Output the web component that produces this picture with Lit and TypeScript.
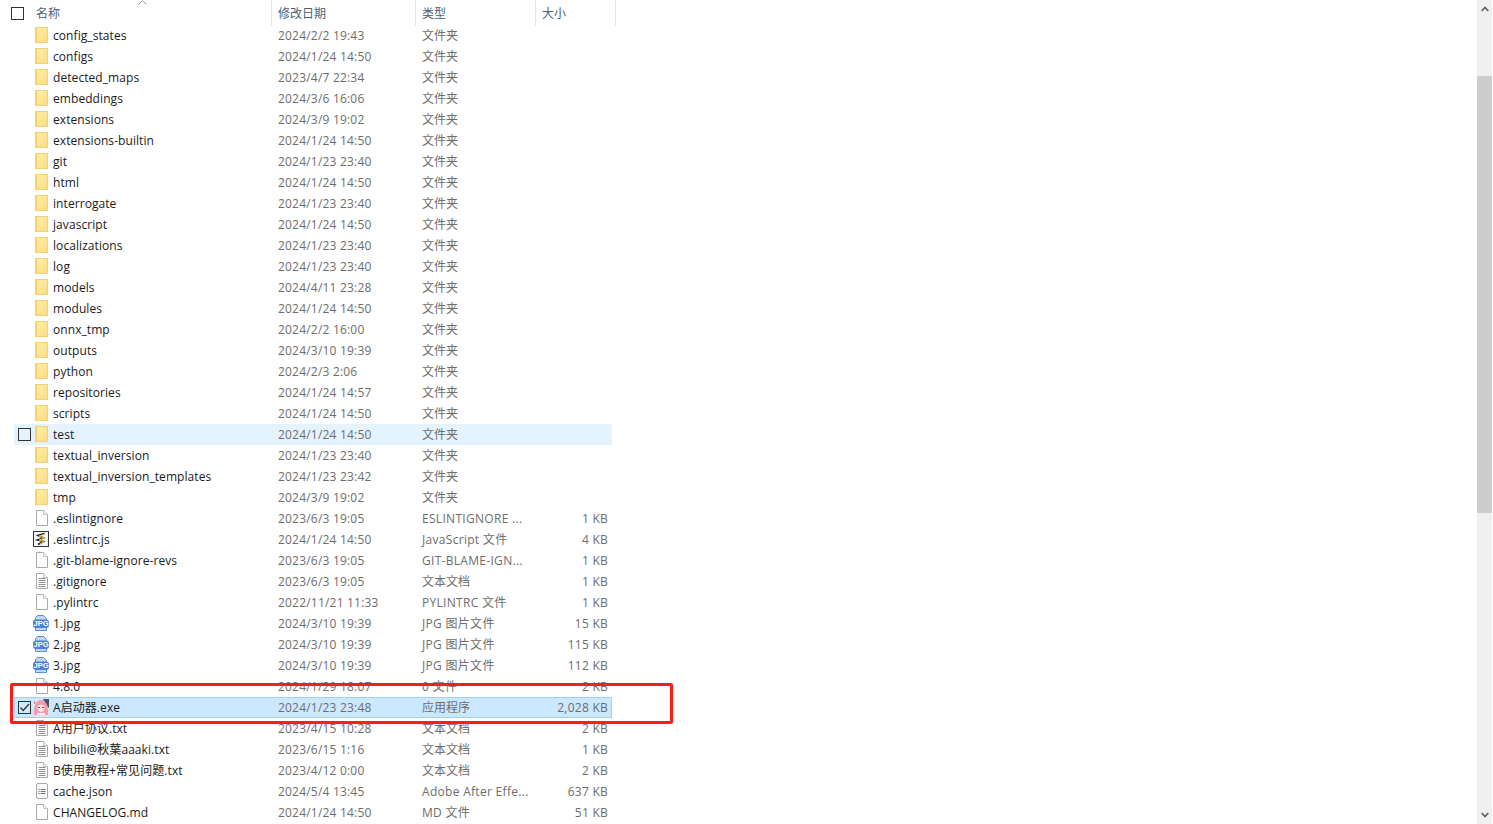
import { LitElement, html, css, svg } from "lit";
import { customElement } from "lit/decorators.js";

type Kind = "folder" | "blank" | "txt" | "json" | "js" | "jpg" | "exe";
interface Row { n: string; d: string; t: string; s?: string; k: Kind; state?: "hot" | "sel"; }

const F = "文件夹";
const folders: [string, string][] = [
  ["config_states", "2024/2/2 19:43"], ["configs", "2024/1/24 14:50"], ["detected_maps", "2023/4/7 22:34"],
  ["embeddings", "2024/3/6 16:06"], ["extensions", "2024/3/9 19:02"], ["extensions-builtin", "2024/1/24 14:50"],
  ["git", "2024/1/23 23:40"], ["html", "2024/1/24 14:50"], ["interrogate", "2024/1/23 23:40"],
  ["javascript", "2024/1/24 14:50"], ["localizations", "2024/1/23 23:40"], ["log", "2024/1/23 23:40"],
  ["models", "2024/4/11 23:28"], ["modules", "2024/1/24 14:50"], ["onnx_tmp", "2024/2/2 16:00"],
  ["outputs", "2024/3/10 19:39"], ["python", "2024/2/3 2:06"], ["repositories", "2024/1/24 14:57"],
  ["scripts", "2024/1/24 14:50"], ["test", "2024/1/24 14:50"], ["textual_inversion", "2024/1/23 23:40"],
  ["textual_inversion_templates", "2024/1/23 23:42"], ["tmp", "2024/3/9 19:02"],
];
const rows: Row[] = [
  ...folders.map(([n, d]): Row => ({ n, d, t: F, k: "folder", state: n === "test" ? "hot" : undefined })),
  { n: ".eslintignore", d: "2023/6/3 19:05", t: "ESLINTIGNORE ...", s: "1 KB", k: "blank" },
  { n: ".eslintrc.js", d: "2024/1/24 14:50", t: "JavaScript 文件", s: "4 KB", k: "js" },
  { n: ".git-blame-ignore-revs", d: "2023/6/3 19:05", t: "GIT-BLAME-IGN...", s: "1 KB", k: "blank" },
  { n: ".gitignore", d: "2023/6/3 19:05", t: "文本文档", s: "1 KB", k: "txt" },
  { n: ".pylintrc", d: "2022/11/21 11:33", t: "PYLINTRC 文件", s: "1 KB", k: "blank" },
  { n: "1.jpg", d: "2024/3/10 19:39", t: "JPG 图片文件", s: "15 KB", k: "jpg" },
  { n: "2.jpg", d: "2024/3/10 19:39", t: "JPG 图片文件", s: "115 KB", k: "jpg" },
  { n: "3.jpg", d: "2024/3/10 19:39", t: "JPG 图片文件", s: "112 KB", k: "jpg" },
  { n: "4.8.0", d: "2024/1/29 18:07", t: "0 文件", s: "2 KB", k: "blank" },
  { n: "A启动器.exe", d: "2024/1/23 23:48", t: "应用程序", s: "2,028 KB", k: "exe", state: "sel" },
  { n: "A用户协议.txt", d: "2023/4/15 10:28", t: "文本文档", s: "2 KB", k: "txt" },
  { n: "bilibili@秋葉aaaki.txt", d: "2023/6/15 1:16", t: "文本文档", s: "1 KB", k: "txt" },
  { n: "B使用教程+常见问题.txt", d: "2023/4/12 0:00", t: "文本文档", s: "2 KB", k: "txt" },
  { n: "cache.json", d: "2024/5/4 13:45", t: "Adobe After Effe...", s: "637 KB", k: "json" },
  { n: "CHANGELOG.md", d: "2024/1/24 14:50", t: "MD 文件", s: "51 KB", k: "blank" },
];

const page = svg`<path d="M1.5 .5H8.5L12.5 4.5V15.5H1.5Z" fill="#fff" stroke="#a9a9a9"/><path d="M8.5 .5V4.5H12.5" fill="#f2f2f2" stroke="#c4c4c4"/>`;

function icon(k: Kind) {
  switch (k) {
    case "folder":
      return html`<svg width="13" height="16" viewBox="0 0 13 16" class="ic"><defs><linearGradient id="fg" x1="0" y1="0" x2="1" y2="1"><stop offset="0" stop-color="#fff0ae"/><stop offset="1" stop-color="#fcdc7c"/></linearGradient></defs><rect x=".5" y=".5" width="12" height="15" fill="url(#fg)" stroke="#f3d272"/><rect x="1" y="1" width="1.2" height="14" fill="#f7d36a"/></svg>`;
    case "blank":
      return html`<svg width="14" height="16" viewBox="0 0 14 16" class="ic">${page}</svg>`;
    case "txt":
      return html`<svg width="14" height="16" viewBox="0 0 14 16" class="ic">${page}<path d="M3.5 5.5H10.5M3.5 7.5H10.5M3.5 9.5H10.5M3.5 11.5H10.5M3.5 13.5H10.5" stroke="#8f8f8f" stroke-width="1"/></svg>`;
    case "json":
      return html`<svg width="14" height="16" viewBox="0 0 14 16" class="ic"><rect x="1.5" y=".5" width="11" height="15" rx="1.5" fill="#fbfbfb" stroke="#a9a9a9"/><path d="M3.5 6.5H4.5M3.5 8.5H4.5M3.5 10.5H4.5" stroke="#555"/><path d="M5.5 6.5H10.5M5.5 8.5H10.5M5.5 10.5H10.5" stroke="#777"/></svg>`;
    case "js":
      return html`<svg width="16" height="16" viewBox="0 0 16 16" class="ic wide"><rect x=".5" y=".5" width="15" height="15" fill="#f4f4f4" stroke="#333"/><path d="M11.5 2.5 5 4.5 10.5 7 4.5 9 10.5 10.5 5 13.5" fill="none" stroke="#1c1c1c" stroke-width="1.6"/><path d="M11 3.5 6 5 11.5 7 6 9 11 10.8 7 13" fill="none" stroke="#e3c52c" stroke-width="1"/></svg>`;
    case "jpg":
      return html`<svg width="16" height="16" viewBox="0 0 16 16" class="ic wide"><path d="M4.5 .5H10.5L13.5 3.5V15.5H2.5V2.5Z" fill="#c4d6f2" stroke="#5c8fdb"/><rect x="0" y="4.5" width="16" height="8.5" rx="3" fill="#4a80d8"/><text x="8" y="11.4" text-anchor="middle" class="jt">JPG</text></svg>`;
    case "exe":
      return html`<svg width="16" height="16" viewBox="0 0 16 16" class="ic wide"><rect width="16" height="16" fill="#e3e6ec"/><path d="M10 0H16V9L13 6Z" fill="#46536d"/><path d="M1 16C0 8 3 1 8 1s8 7 7 15Z" fill="#ee9db1"/><path d="M4.5 8C4.5 5 11.5 5 11.5 8S10 13 8 13 4.5 11 4.5 8Z" fill="#fbe3dc"/><path d="M5 8.5H7M9 8.5H11" stroke="#a13a55" stroke-width="1.2"/><path d="M4 14H12V16H4Z" fill="#f7f3f3"/><path d="M1 2 3 4 1 5Z" fill="#d9637f"/></svg>`;
  }
}

function chk(on = false) {
  return html`<span class="chk">${on
    ? html`<svg width="11" height="11" viewBox="0 0 11 11"><path d="M1.5 5.5 4.2 8.5 10 2" fill="none" stroke="#333" stroke-width="1.2"/></svg>`
    : ""}</span>`;
}

const hasLatin = (t: string) => /[A-Za-z0-9]/.test(t);

@customElement("app-root")
export class AppRoot extends LitElement {
  static styles = css`
    :host {
      display: block; position: relative; width: 1493px; height: 824px; overflow: hidden; background: #fff;
      font-family: "Open Sans", "Noto Sans CJK SC", sans-serif; font-size: 12px;
    }
    .main { width: 1477px; height: 824px; overflow: hidden; }
    .head { display: flex; height: 26px; width: 616px; color: #4c607a; }
    .hc { box-sizing: border-box; border-right: 1px solid #e5e5e5; padding: 5px 0 0 6px; line-height: 17px; position: relative; }
    .h0 { width: 272px; padding-left: 36px; }
    .h1 { width: 144px; }
    .h2 { width: 120px; }
    .h3 { width: 80px; }
    .head .chk { position: absolute; left: 11px; top: 7px; }
    .sort { position: absolute; left: 138px; top: 0; }
    .list { margin: -1px 0 0 14px; width: 598px; }
    .row {
      box-sizing: border-box; height: 21px; display: grid;
      grid-template-columns: 39px 225px 144px 110px 78px; align-items: center;
      color: #6d6d6d; line-height: 21px; white-space: nowrap; border: 1px solid transparent;
    }
    .row > * { margin-top: -1px; }
    .row.hot { background: #e5f3ff; border-color: #e5f3ff; }
    .row.sel { background: #cce8ff; border-color: #99d1ff; }
    .lead { position: relative; height: 19px; }
    .chk {
      display: block; box-sizing: border-box; width: 13px; height: 13px; background: #fff;
      border: 1px solid #333; line-height: 0;
    }
    .row .chk { position: absolute; left: 3px; top: 3px; background: transparent; }
    .ic { position: absolute; left: 20px; top: 1px; display: block; }
    .ic.wide { left: 18px; }
    .nm { color: #1a1a1a; margin-left: -1px; letter-spacing: .07px; }
    .dt { margin-left: -1px; letter-spacing: .2px; }
    .ty { margin-left: -1px; }
    .ty.lat { letter-spacing: .3px; }
    .sz { text-align: right; margin-right: 3px; letter-spacing: .25px; }
    .jt { font: bold 7.5px "Liberation Sans", sans-serif; fill: #fff; }
    .mark {
      position: absolute; left: 10px; top: 683px; width: 663px; height: 41px; box-sizing: border-box;
      border: 3px solid #ff1d12; border-radius: 2px; pointer-events: none;
    }
    .sb { position: absolute; left: 1477px; top: 0; width: 15px; height: 824px; background: #f0f0f0; }
    .thumb { position: absolute; left: 0; top: 76px; width: 15px; height: 437px; background: #cdcdcd; }
    .arr { position: absolute; left: 4px; }
    .up { top: 6px; }
    .down { top: 812px; }
  `;

  render() {
    return html`
      <div class="main">
        <div class="head">
          <div class="hc h0">${chk()}<svg class="sort" width="9" height="5" viewBox="0 0 9 5"><path d="M.5 4.5 4.5 .5 8.5 4.5" fill="none" stroke="#9a9a9a"/></svg>名称</div>
          <div class="hc h1">修改日期</div>
          <div class="hc h2">类型</div>
          <div class="hc h3">大小</div>
        </div>
        <div class="list">
          ${rows.map((r) => html`
            <div class="row ${r.state ?? ""}">
              <div class="lead">${r.state ? chk(r.state === "sel") : ""}${icon(r.k)}</div>
              <div class="nm">${r.n}</div>
              <div class="dt">${r.d}</div>
              <div class="ty ${hasLatin(r.t) ? "lat" : ""}">${r.t}</div>
              <div class="sz">${r.s ?? ""}</div>
            </div>`)}
        </div>
      </div>
      <div class="mark"></div>
      <div class="sb">
        <svg class="arr up" width="8" height="6" viewBox="0 0 8 6"><path d="M.7 5 4 1.5 7.3 5" fill="none" stroke="#606060" stroke-width="1.7"/></svg>
        <div class="thumb"></div>
        <svg class="arr down" width="8" height="6" viewBox="0 0 8 6"><path d="M.7 1 4 4.5 7.3 1" fill="none" stroke="#606060" stroke-width="1.7"/></svg>
      </div>`;
  }
}
